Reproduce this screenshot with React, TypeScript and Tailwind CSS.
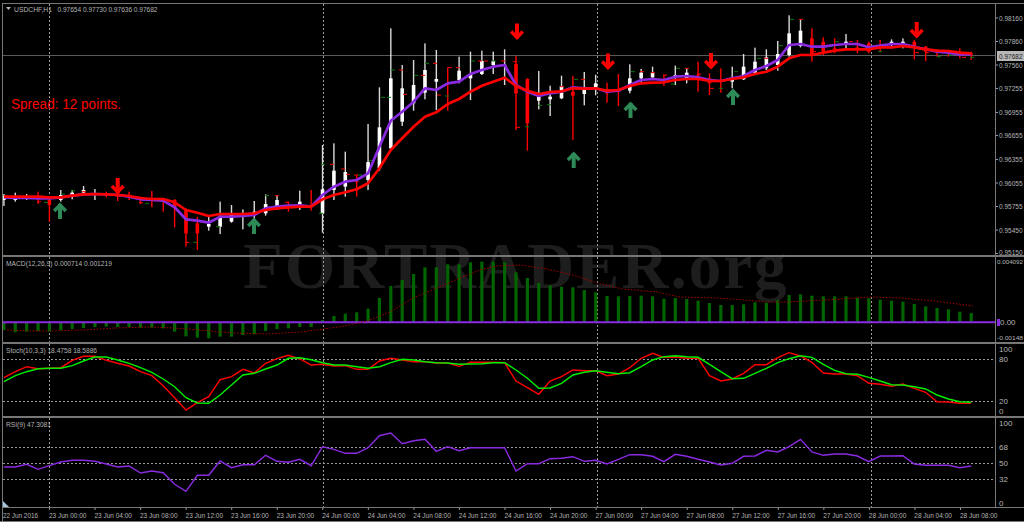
// all chart data is in 3x pixels (y), divided by 3 when drawn
const barX = (i: number) => 3.9 + 11.38 * i;
const gridX = [49.5, 323.5, 597.5, 871.5];

type Candle = [string, number, number, number, number];

const candles: Candle[] = [
  ['w', 582, 618, 588, 600], ['w', 578, 605, 590, 600], ['w', 582, 600, 590, 596], ['r', 575, 612, 589, 592],
  ['r', 595, 665, 600, 615], ['w', 570, 605, 585, 600], ['w', 570, 598, 578, 590], ['w', 558, 580, 570, 578],
  ['w', 567, 600, 580, 584], ['r', 575, 592, 582, 585], ['r', 575, 603, 580, 590], ['r', 575, 600, 588, 592],
  ['r', 590, 612, 596, 599], ['r', 573, 622, 596, 600], ['r', 595, 635, 597, 601], ['r', 597, 682, 600, 625],
  ['r', 625, 740, 630, 700], ['r', 650, 750, 670, 700], ['w', 650, 692, 672, 680], ['w', 605, 702, 650, 680],
  ['w', 615, 668, 640, 665], ['w', 628, 688, 648, 651], ['w', 603, 672, 635, 645], ['w', 583, 647, 612, 640],
  ['w', 585, 630, 600, 618], ['r', 605, 635, 620, 623], ['w', 572, 630, 605, 615], ['r', 570, 632, 618, 621],
  ['w', 435, 698, 568, 640], ['w', 430, 600, 512, 570],
  ['w', 455, 590, 516, 560], ['r', 525, 590, 544, 547], ['w', 372, 570, 486, 540], ['w', 262, 512, 382, 505],
  ['w', 85, 450, 235, 445], ['w', 195, 378, 265, 365], ['w', 180, 332, 255, 310], ['w', 130, 298, 210, 278],
  ['w', 150, 330, 237, 245], ['r', 202, 332, 250, 253], ['w', 170, 250, 212, 240], ['w', 155, 300, 222, 235],
  ['w', 152, 225, 183, 222], ['w', 155, 222, 183, 195], ['w', 148, 255, 194, 197], ['r', 168, 390, 192, 280],
  ['r', 235, 452, 237, 370], ['w', 213, 328, 290, 302], ['w', 257, 348, 290, 298], ['w', 227, 297, 258, 295],
  ['r', 228, 420, 275, 287], ['w', 216, 316, 270, 282], ['w', 224, 286, 250, 265], ['r', 248, 308, 268, 280],
  ['r', 222, 318, 268, 271], ['w', 193, 280, 235, 272], ['w', 207, 250, 218, 235], ['w', 200, 240, 218, 232],
  ['r', 225, 258, 240, 243], ['w', 197, 255, 225, 232],
  ['w', 205, 250, 218, 235], ['r', 185, 275, 224, 227], ['r', 220, 285, 235, 250], ['r', 205, 278, 242, 245],
  ['w', 200, 265, 232, 245], ['w', 162, 240, 200, 238], ['w', 143, 225, 185, 218], ['w', 148, 210, 172, 205],
  ['w', 123, 212, 162, 195], ['w', 46, 170, 100, 165], ['w', 58, 142, 92, 138], ['r', 85, 185, 115, 165],
  ['r', 112, 165, 125, 160], ['r', 115, 160, 145, 148], ['w', 102, 145, 125, 133], ['r', 120, 160, 142, 145],
  ['r', 125, 160, 130, 155], ['r', 120, 155, 140, 143], ['w', 118, 145, 125, 133], ['w', 115, 145, 125, 132],
  ['r', 120, 178, 125, 140], ['r', 138, 183, 140, 155], ['r', 148, 170, 152, 156], ['r', 150, 170, 153, 156],
  ['r', 145, 175, 158, 162], ['r', 155, 180, 160, 164],
];

const maRed = [
  590, 590, 590, 590, 592, 592, 587, 583, 582, 583, 585, 588, 594, 597, 597, 607, 630, 638, 648, 642,
  642, 642, 640, 630, 625, 622, 620, 620, 598, 585, 577, 568, 550, 505, 450, 415, 380, 350, 337, 312,
  297, 275, 257, 245, 233, 258, 272, 282, 276, 274, 265, 266, 265, 272, 270, 258, 250, 248, 247, 240,
  237, 237, 243, 243, 237, 232, 222, 215, 200, 175, 165, 165, 158, 152, 148, 148, 148, 142, 142, 138,
  142, 148, 152, 153, 158, 160,
];
const maPurple = [
  592, 594, 594, 595, 595, 592, 587, 583, 582, 583, 585, 590, 598, 600, 602, 622, 658, 662, 668, 650,
  650, 648, 645, 625, 620, 617, 616, 620, 585, 560, 545, 540, 520, 440, 362, 335, 305, 265, 270, 250,
  245, 222, 210, 200, 195, 255, 275, 288, 280, 275, 262, 265, 265, 275, 272, 255, 240, 237, 240, 230,
  228, 232, 240, 243, 235, 228, 210, 198, 180, 135, 132, 140, 140, 135, 132, 132, 142, 137, 132, 132,
  140, 148, 155, 158, 163, 163,
];

// [x, y3, colour]
const ticks: [number, number, string][] = [
  [39, 605, 'r'], [46, 607, 'g'], [63, 582, 'g'], [73, 573, 'g'], [84, 575, 'r'], [141, 608, 'r'], [147, 610, 'g'],
  [187, 727, 'r'], [195, 727, 'g'], [218, 680, 'g'], [267, 587, 'g'], [277, 587, 'r'], [287, 607, 'r'], [321, 640, 'g'],
  [323, 493, 'g'], [332, 493, 'r'], [343, 507, 'r'], [348, 523, 'r'], [356, 525, 'r'], [360, 525, 'g'], [371, 482, 'g'],
  [383, 292, 'g'], [389, 292, 'g'], [393, 210, 'g'], [401, 210, 'r'], [405, 283, 'r'], [416, 226, 'g'], [423, 226, 'r'],
  [427, 190, 'g'], [435, 190, 'r'], [439, 285, 'r'], [447, 288, 'g'], [450, 203, 'r'], [458, 203, 'r'], [473, 183, 'g'],
  [480, 183, 'r'], [486, 183, 'r'], [494, 183, 'g'], [503, 183, 'r'], [515, 185, 'r'], [518, 382, 'r'], [527, 380, 'g'],
  [540, 316, 'g'], [549, 314, 'g'], [562, 260, 'r'], [576, 238, 'g'], [583, 238, 'r'], [633, 215, 'g'], [642, 215, 'r'],
  [653, 218, 'r'], [665, 225, 'r'], [673, 252, 'g'], [678, 205, 'g'], [687, 205, 'r'], [699, 222, 'r'], [712, 265, 'r'],
  [721, 265, 'g'], [736, 215, 'g'], [759, 175, 'g'], [766, 175, 'r'], [781, 137, 'g'], [792, 58, 'g'], [801, 58, 'r'],
  [814, 155, 'r'], [837, 125, 'g'], [851, 125, 'r'], [880, 155, 'g'], [917, 158, 'r'], [927, 158, 'r'], [939, 170, 'g'],
  [951, 165, 'g'], [964, 172, 'r'], [972, 172, 'g'],
];

const downArrows: [number, number][] = [[117.7, 178], [517, 23.5], [608, 53.5], [711, 53], [916.7, 22]];
const upArrows: [number, number][] = [[60, 202], [254, 217], [573.7, 151], [630.5, 101], [733, 88]];

const histTops = [
  225, 232, 230, 228, 230, 226, 222, 219, 216, 215, 216, 216, 218, 218, 220, 230, 244, 248, 250, 245,
  245, 240, 238, 228, 222, 220, 216, 216, 195, 183, 176, 172, 161, 129, 93, 75, 57, 37, 37, 28,
  28, 22, 20, 20, 22, 52, 69, 84, 91, 95, 97, 105, 112, 123, 124, 123, 122, 124, 131, 129,
  132, 137, 144, 150, 150, 148, 142, 143, 135, 120, 118, 122, 124, 124, 124, 128, 130, 134, 137, 140,
  147, 154, 159, 163, 170, 174,
];
const signal = '7,330 30,331 50,331 83,330 117,328 150,327 173,328 200,330 233,333 267,334 300,332 323,329 345,326 367,321 390,312 413,298 437,288 460,278 480,270 497,266 520,265 547,269 573,275 597,283 623,289 657,292 680,297 717,298 744,300 767,302 790,302 824,300 871,297 901,298 934,301 973,306';

const stochRed = [
  368, 350, 335, 341, 340, 338, 316, 304, 304, 316, 325, 333, 350, 362, 392, 428, 465, 443, 425, 374,
  365, 343, 354, 325, 311, 301, 312, 330, 328, 333, 332, 343, 343, 318, 310, 315, 320, 320, 324, 324,
  334, 322, 322, 322, 323, 378, 398, 418, 378, 365, 345, 347, 347, 362, 357, 338, 310, 295, 307, 306,
  310, 310, 362, 378, 372, 355, 329, 329, 308, 293, 303, 322, 354, 357, 357, 362, 385, 388, 394, 387,
  400, 412, 440, 441, 445, 445,
];
const stochGreen = [
  380, 362, 350, 341, 340, 340, 332, 318, 306, 306, 315, 325, 338, 352, 372, 395, 428, 444, 445, 420,
  390, 360, 355, 342, 330, 310, 308, 314, 323, 330, 330, 335, 340, 335, 323, 313, 315, 320, 323, 324,
  328, 327, 326, 323, 323, 345, 370, 400, 399, 385, 360, 352, 347, 352, 356, 353, 335, 315, 305, 302,
  305, 307, 328, 350, 371, 370, 355, 340, 323, 311, 302, 307, 328, 346, 356, 358, 367, 378, 389, 390,
  395, 402, 420, 432, 440, 442,
];
const rsi = [
  636, 636, 628, 643, 632, 621, 616, 616, 619, 627, 636, 633, 654, 648, 653, 688, 709, 661, 661, 618,
  638, 629, 629, 601, 619, 622, 613, 632, 575, 583, 595, 595, 578, 542, 534, 566, 557, 553, 589, 575,
  587, 578, 578, 578, 578, 648, 626, 626, 611, 610, 605, 619, 616, 627, 613, 599, 599, 604, 620, 598,
  604, 613, 621, 630, 625, 604, 603, 586, 591, 575, 553, 591, 601, 597, 597, 603, 620, 603, 603, 602,
  627, 631, 631, 631, 638, 633,
];

const timeLabels = [
  '23 Jun 00:00', '23 Jun 04:00', '23 Jun 08:00', '23 Jun 12:00', '23 Jun 16:00', '23 Jun 20:00',
  '24 Jun 00:00', '24 Jun 04:00', '24 Jun 08:00', '24 Jun 12:00', '24 Jun 16:00', '24 Jun 20:00',
  '27 Jun 00:00', '27 Jun 04:00', '27 Jun 08:00', '27 Jun 12:00', '27 Jun 16:00', '27 Jun 20:00',
  '28 Jun 00:00', '28 Jun 04:00', '28 Jun 08:00',
];

const priceLabels: [string, number][] = [
  ['0.98160', 18], ['0.97860', 41.5], ['0.97560', 65], ['0.97255', 88.5], ['0.96955', 112.5], ['0.96655', 135.5],
  ['0.96355', 159.5], ['0.96055', 183], ['0.95755', 206.5], ['0.95450', 230],
];

const toPoints = (ys: number[], base = 0) =>
  ys.map((y, i) => `${barX(i).toFixed(1)},${(base + y / 3).toFixed(1)}`).join(' ');

const AXIS_TEXT = '#b4b4b4';
const GRID = '#9a9a9a';

function Label({ x, y, w, size = 8, children, fill = AXIS_TEXT }: { x: number; y: number; w?: number; size?: number; children: string; fill?: string }) {
  return (
    <text x={x} y={y} fontSize={size} fill={fill} textLength={w} lengthAdjust="spacingAndGlyphs">
      {children}
    </text>
  );
}

function Level({ y }: { y: number }) {
  return <line x1={3} x2={995} y1={y} y2={y} stroke={GRID} strokeDasharray="2 2" />;
}

function Pane({ top, height, plot, axis, sepClass }: { top: number; height: number; plot: React.ReactNode; axis: React.ReactNode; sepClass: string }) {
  return (
    <div className={`flex shrink-0 border-[#777] ${sepClass}`}>
      <svg width={992} height={height} viewBox={`3 ${top} 992 ${height}`} className="shrink-0 overflow-hidden">
        {gridX.map((x) => (
          <line key={x} x1={x} x2={x} y1={top} y2={top + height} stroke={GRID} strokeDasharray="2 2" />
        ))}
        {plot}
      </svg>
      <svg width={28} height={height} viewBox={`996 ${top} 28 ${height}`} className="box-content shrink-0 border-l border-[#777]">
        {axis}
      </svg>
    </div>
  );
}

function DownArrow({ x, y }: { x: number; y: number }) {
  return (
    <g fill="none" stroke="#ff0000">
      <line x1={x} x2={x} y1={y} y2={y + 15} strokeWidth={4} />
      <polyline points={`${x - 5.8},${y + 8} ${x},${y + 14} ${x + 5.8},${y + 8}`} strokeWidth={3.4} />
    </g>
  );
}

function UpArrow({ x, y }: { x: number; y: number }) {
  return (
    <g fill="none" stroke="#2e8b57">
      <line x1={x} x2={x} y1={y + 17} y2={y + 2} strokeWidth={4} />
      <polyline points={`${x - 5.8},${y + 9} ${x},${y + 3} ${x + 5.8},${y + 9}`} strokeWidth={3.4} />
    </g>
  );
}

function PriceChart() {
  return (
    <>
      <line x1={3} x2={995} y1={55.5} y2={55.5} stroke="#5a5a5a" />
      {candles.map(([c, hi, lo, t, b], i) => {
        const fill = c === 'w' ? '#ffffff' : '#ff0000';
        return (
          <g key={i} fill={fill}>
            <rect x={barX(i) - 0.7} y={hi / 3} width={1.4} height={(lo - hi) / 3} opacity={c === 'w' ? 0.85 : 1} />
            <rect x={barX(i) - 1.8} y={t / 3} width={3.6} height={(b - t) / 3} />
          </g>
        );
      })}
      {ticks.map(([x, y, c], i) => (
        <rect key={i} x={x - 2} y={y / 3 - 0.5} width={4} height={1} fill={c === 'r' ? '#ff0000' : '#0b7a0b'} />
      ))}
      <polyline points={toPoints(maPurple)} fill="none" stroke="#8a2be2" strokeWidth={2.7} strokeLinejoin="round" />
      <polyline points={toPoints(maRed)} fill="none" stroke="#ff0000" strokeWidth={2.7} strokeLinejoin="round" />
      {downArrows.map(([x, y]) => (
        <DownArrow key={x} x={x} y={y} />
      ))}
      {upArrows.map(([x, y]) => (
        <UpArrow key={x} x={x} y={y} />
      ))}
      <polygon points="6,7 11,7 8.5,10" fill={AXIS_TEXT} />
      <Label x={14} y={12} w={38}>USDCHF,H1</Label>
      <Label x={57.5} y={12} w={100}>0.97654 0.97730 0.97636 0.97682</Label>
      <text x={11} y={109} fontSize={14} fill="#ff0000" textLength={110} lengthAdjust="spacingAndGlyphs">
        Spread: 12 points.
      </text>
    </>
  );
}

function PriceAxis() {
  return (
    <>
      {priceLabels.map(([t, y]) => (
        <g key={t}>
          <line x1={996} x2={998} y1={y} y2={y} stroke="#999" />
          <Label x={999} y={y + 2.7} w={23.5} size={6.8}>{t}</Label>
        </g>
      ))}
      <line x1={996} x2={998} y1={253.5} y2={253.5} stroke="#999" />
      <Label x={999} y={255} w={23.5} size={6.8}>0.95150</Label>
      <rect x={997} y={51} width={27} height={10} fill="#b8b8b8" />
      <Label x={999} y={58.5} w={23.5} size={6.8} fill="#222222">0.97682</Label>
    </>
  );
}

function MacdChart() {
  return (
    <>
      {histTops.map((top, i) => {
        const y1 = 255 + top / 3;
        const y2 = 322;
        return <rect key={i} x={barX(i) - 1.6} y={Math.min(y1, y2)} width={3.2} height={Math.abs(y2 - y1)} fill="#006400" />;
      })}
      <line x1={3} x2={995} y1={322.3} y2={322.3} stroke="#8a2be2" strokeWidth={2} />
      <polyline points={signal} fill="none" stroke="#a00000" strokeDasharray="1.6 1.6" />
      <Label x={6} y={266} w={106}>MACD(12,26,9) 0.000714 0.001219</Label>
    </>
  );
}

function MacdAxis() {
  return (
    <>
      <Label x={997} y={264} w={26} size={6.2}>0.004092</Label>
      <rect x={997} y={319} width={3} height={7} fill="#8a2be2" />
      <Label x={1000} y={325}>0.00</Label>
      <Label x={997} y={340} w={26} size={6}>-0.00148</Label>
    </>
  );
}

function StochChart() {
  return (
    <>
      <Level y={359.5} />
      <Level y={401.5} />
      <polyline points={toPoints(stochRed, 255)} fill="none" stroke="#ff0000" strokeWidth={1.4} />
      <polyline points={toPoints(stochGreen, 255)} fill="none" stroke="#00ee00" strokeWidth={1.4} />
      <Label x={6} y={353} w={91}>Stoch(10,3,3) 18.4758 18.5886</Label>
    </>
  );
}

function StochAxis() {
  return (
    <>
      {[['100', 349], ['80', 359], ['20', 401.7], ['0', 411.7]].map(([t, y]) => (
        <Label key={t} x={999} y={Number(y) + 2.7}>{String(t)}</Label>
      ))}
    </>
  );
}

function RsiChart() {
  return (
    <>
      <Level y={447.5} />
      <Level y={463.5} />
      <Level y={479.5} />
      <polyline points={toPoints(rsi, 255)} fill="none" stroke="#8a2be2" strokeWidth={1.4} />
      <Label x={6} y={427} w={45}>RSI(9) 47.3081</Label>
      <polygon points="3,501 3,507 9,507" fill="#a8c4d8" />
    </>
  );
}

function RsiAxis() {
  return (
    <>
      {[['100', 423.3], ['68', 447.7], ['50', 463], ['32', 479.7], ['0', 503.3]].map(([t, y]) => (
        <Label key={t} x={999} y={Number(y) + 2.7}>{String(t)}</Label>
      ))}
    </>
  );
}

function TimeAxis() {
  return (
    <svg width={1021} height={13} viewBox="3 508 1021 13" className="shrink-0">
      <Label x={3} y={517.5} w={35}>22 Jun 2016</Label>
      {timeLabels.map((t, i) => {
        const x = 49.5 + 45.55 * i;
        return (
          <g key={t}>
            <line x1={x} x2={x} y1={508} y2={510} stroke="#999" />
            <Label x={x - 0.6} y={517.5} w={37.5}>{t}</Label>
          </g>
        );
      })}
    </svg>
  );
}

export default function App() {
  return (
    <div className="h-[524px] w-[1024px] overflow-hidden bg-white font-['Liberation_Sans',sans-serif]">
      <div className="relative flex h-[522px] flex-col bg-black pl-[2px] pt-[3px]">
        {/* watermark lies behind the chart panes */}
        <div className="absolute left-[243px] top-[234px] whitespace-nowrap font-['Liberation_Serif',serif] text-[65px] font-bold leading-none tracking-[2px] text-[#1d1d1d]">
          FORTRADER.org
        </div>
        <div className="relative z-10 flex h-[518px] flex-col border-l border-t border-[#777]">
          <Pane top={4} height={251} plot={<PriceChart />} axis={<PriceAxis />} sepClass="border-b-2" />
          <Pane top={257} height={85} plot={<MacdChart />} axis={<MacdAxis />} sepClass="border-b-2" />
          <Pane top={344} height={72} plot={<StochChart />} axis={<StochAxis />} sepClass="border-b-2" />
          <Pane top={418} height={89} plot={<RsiChart />} axis={<RsiAxis />} sepClass="border-b" />
          <TimeAxis />
        </div>
        <div className="ml-[-2px] h-px bg-[#777]" />
      </div>
    </div>
  );
}
